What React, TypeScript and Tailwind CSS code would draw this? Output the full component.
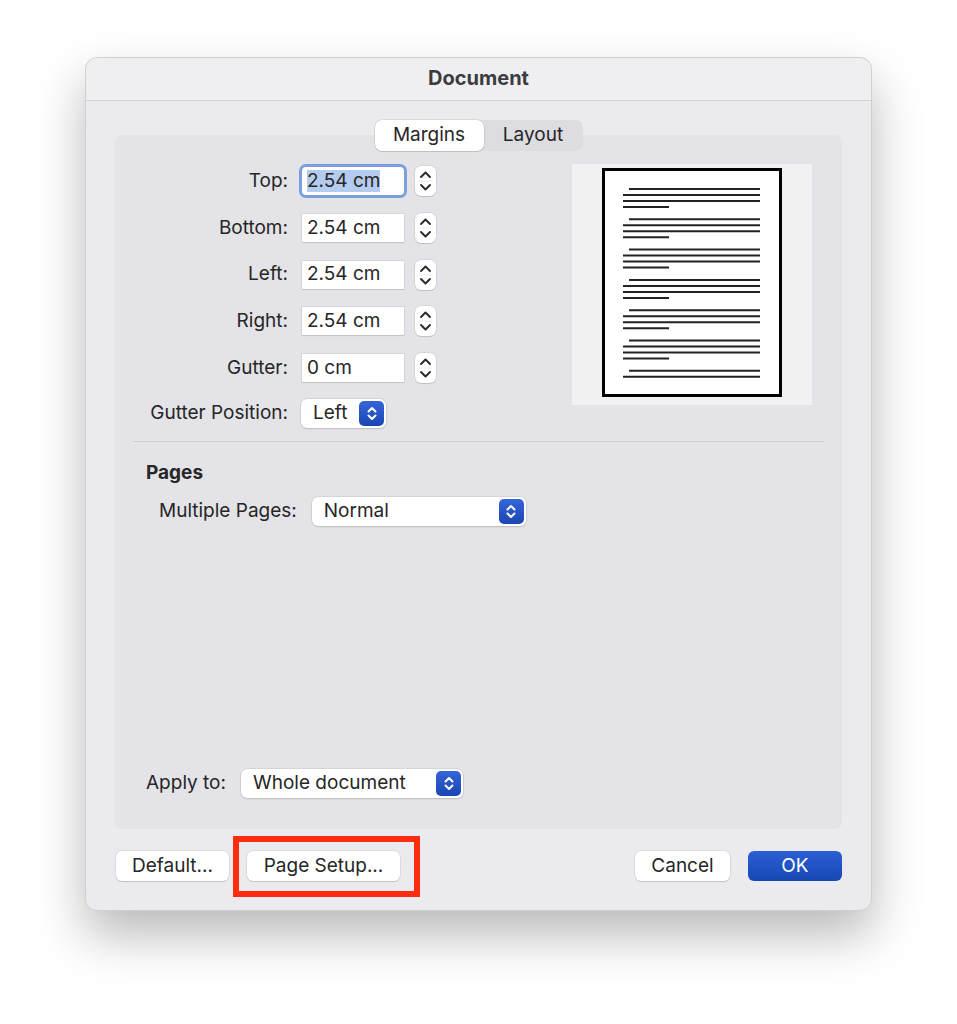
import React from "react";

const font = { fontFamily: "Inter, 'Liberation Sans', sans-serif" };

// up/down chevrons for the blue popup buttons
function Chevrons({ color }: { color: string }) {
  return (
    <svg width="12" height="19" viewBox="0 0 12 19" fill="none">
      <path d="M2.5 7.5 L6 4 L9.5 7.5" stroke={color} strokeWidth="2" strokeLinecap="round" strokeLinejoin="round" />
      <path d="M2.5 11.5 L6 15 L9.5 11.5" stroke={color} strokeWidth="2" strokeLinecap="round" strokeLinejoin="round" />
    </svg>
  );
}

function Stepper() {
  return (
    <div className="ml-[11px] flex h-[30px] w-[21px] items-center justify-center rounded-[6px] bg-white shadow-[0_0_0_0.5px_rgba(0,0,0,0.12),0_1px_1px_rgba(0,0,0,0.1)]">
      <svg width="21" height="30" viewBox="0 0 21 30" fill="none">
        <path d="M6 11 L10.5 6.5 L15 11" stroke="#2a2a2a" strokeWidth="1.9" strokeLinecap="round" strokeLinejoin="round" />
        <line x1="3" y1="15" x2="18" y2="15" stroke="#ececec" strokeWidth="1" />
        <path d="M6 19 L10.5 23.5 L15 19" stroke="#2a2a2a" strokeWidth="1.9" strokeLinecap="round" strokeLinejoin="round" />
      </svg>
    </div>
  );
}

function NumField({ label, value, focused }: { label: string; value: string; focused?: boolean }) {
  return (
    <div className="flex h-[28px] items-center">
      <span className="w-[187px] pr-[14px] text-right">{label}</span>
      <div
        className={
          focused
            ? "flex h-[28px] w-[102px] items-center rounded-[4px] bg-white pl-[5px] ring-[3px] ring-[#7a9fdc]"
            : "flex h-[28px] w-[102px] items-center bg-white pl-[5px] shadow-[0_0_0_0.5px_rgba(0,0,0,0.12),0_1px_1px_rgba(0,0,0,0.08)]"
        }
      >
        <span className={focused ? "bg-[#b4ccef] leading-[22px]" : ""}>{value}</span>
      </div>
      <Stepper />
    </div>
  );
}

function Popup({ value, width }: { value: string; width: string }) {
  return (
    <div
      className={`flex h-[29px] ${width} items-center justify-between rounded-[6px] bg-white pl-[12px] pr-[2px] shadow-[0_0_0_0.5px_rgba(0,0,0,0.12),0_1px_2px_rgba(0,0,0,0.12)]`}
    >
      <span>{value}</span>
      <div className="flex h-[25px] w-[25px] items-center justify-center rounded-[5px] bg-gradient-to-b from-[#3566d8] to-[#1a45b3]">
        <Chevrons color="#fff" />
      </div>
    </div>
  );
}

function Btn({ children, width }: { children: React.ReactNode; width: string }) {
  return (
    <div
      className={`flex h-[30px] ${width} items-center justify-center rounded-[6px] bg-white shadow-[0_0_0_0.5px_rgba(0,0,0,0.12),0_1px_1px_rgba(0,0,0,0.12)]`}
    >
      {children}
    </div>
  );
}

// miniature page with text lines
function PagePreview() {
  const groups = [0, 1, 2, 3, 4, 5, 6];
  return (
    <div className="flex h-[241px] w-[240px] justify-center bg-[#f1f1f2] pt-[4px]">
      <svg width="180" height="229" viewBox="0 0 180 229">
        <rect x="1.5" y="1.5" width="177" height="226" fill="#fff" stroke="#000" strokeWidth="3" />
        {groups.map((g) => {
          const y = 21 + g * 30.3;
          const last = g === 6;
          return (
            <g key={g} stroke="#222" strokeWidth="2">
              <line x1="27" y1={y} x2="158" y2={y} />
              <line x1="21" y1={y + 6} x2="158" y2={y + 6} />
              {!last && <line x1="21" y1={y + 12} x2="158" y2={y + 12} />}
              {!last && <line x1="21" y1={y + 18} x2="67" y2={y + 18} />}
            </g>
          );
        })}
      </svg>
    </div>
  );
}

export default function App() {
  return (
    <div className="h-[1024px] w-[957px] bg-white pl-[85px] pt-[57px] text-[19px] text-[#262626]" style={font}>
      <div className="flex h-[854px] w-[787px] flex-col rounded-[12px] border border-[#cfcfd3] bg-[#ebebef] shadow-[0_24px_50px_rgba(0,0,0,0.28)]">
        <div className="flex h-[43px] items-center justify-center rounded-t-[12px] border-b border-[#d3d3d7] bg-[#efeff2] pb-[2px] text-[20px] font-bold text-[#3c3c3e]">
          Document
        </div>

        <div className="flex flex-col px-[29px]">
          {/* tabs */}
          <div className="relative z-10 mt-[19px] -mb-[16px] flex justify-center">
            <div className="flex h-[31px] rounded-[7px] bg-[#dcdce1]">
              <div className="flex w-[109px] items-center justify-center rounded-[7px] bg-white shadow-[0_0_0_0.5px_rgba(0,0,0,0.15),0_1px_1px_rgba(0,0,0,0.1)]">
                Margins
              </div>
              <div className="flex w-[99px] items-center justify-center">Layout</div>
            </div>
          </div>

          {/* group box */}
          <div className="flex h-[694px] flex-col rounded-[7px] bg-[#e3e3e8] px-[18px] pt-[29px] pb-[31px]">
            <div className="flex">
              <div className="-ml-[18px] flex flex-col">
                <div className="mt-[3px] flex flex-col gap-[18.75px]">
                  <NumField label="Top:" value="2.54 cm" focused />
                  <NumField label="Bottom:" value="2.54 cm" />
                  <NumField label="Left:" value="2.54 cm" />
                  <NumField label="Right:" value="2.54 cm" />
                  <NumField label="Gutter:" value="0 cm" />
                </div>
                <div className="mt-[17px] flex items-center">
                  <span className="w-[186px] pr-[13px] text-right">Gutter Position:</span>
                  <Popup value="Left" width="w-[85px]" />
                </div>
              </div>
              <div className="ml-auto mr-[12px]">
                <PagePreview />
              </div>
            </div>

            <div className="mt-[13px] h-px bg-[#cdcdd2]" />

            <div className="mt-[17px] pl-[13px] font-bold">Pages</div>
            <div className="mt-[9px] flex items-center pl-[26px]">
              <span className="mr-[15px]">Multiple Pages:</span>
              <Popup value="Normal" width="w-[214px]" />
            </div>

            <div className="mt-auto flex items-center pl-[13px]">
              <span className="mr-[15px]">Apply to:</span>
              <Popup value="Whole document" width="w-[222px]" />
            </div>
          </div>

          {/* bottom buttons */}
          <div className="mt-[22px] flex items-center">
            <div className="ml-px">
              <Btn width="w-[113px]">Default...</Btn>
            </div>
            <div className="relative ml-[18px]">
              <Btn width="w-[153px]">Page Setup...</Btn>
              <div className="absolute -top-[15px] -right-[20px] -bottom-[16px] -left-[14px] border-[6px] border-[#ff2d0f]" />
            </div>
            <div className="ml-auto flex gap-[18px]">
              <Btn width="w-[95px]">Cancel</Btn>
              <div className="flex h-[30px] w-[94px] items-center justify-center rounded-[6px] bg-gradient-to-b from-[#2a5fd3] to-[#1847b5] text-white">
                OK
              </div>
            </div>
          </div>
        </div>
      </div>
    </div>
  );
}
